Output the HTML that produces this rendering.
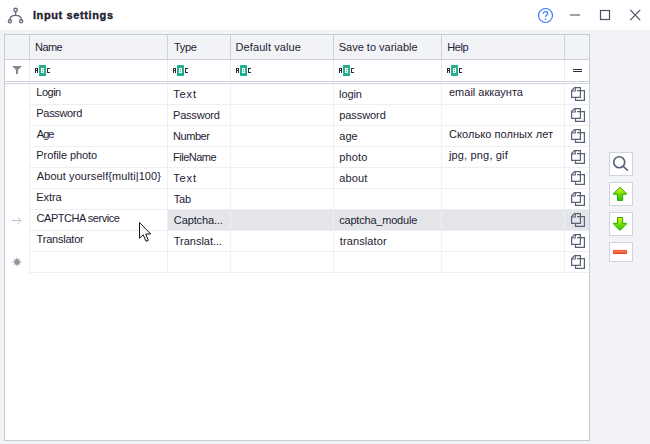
<!DOCTYPE html>
<html>
<head>
<meta charset="utf-8">
<title>Input settings</title>
<style>
html,body{margin:0;padding:0;}
body{width:650px;height:444px;overflow:hidden;background:#f1f3f7;font-family:"Liberation Sans",sans-serif;font-size:11px;color:#1e2233;position:relative;}
.abs{position:absolute;}
#titlebar{left:0;top:0;width:650px;height:30px;background:#ffffff;}
#title{left:32.92px;top:8px;font-weight:bold;font-size:11px;line-height:14px;letter-spacing:0.618px;white-space:nowrap;-webkit-text-stroke:0.35px #1c2030;color:#1c2030;}
#grid{left:4px;top:34px;width:584px;height:405px;border:1px solid #c6cbd9;background:#ffffff;}
/* coordinates inside #gridin are page coords (offset compensated) */
#gridin{left:-5px;top:-35px;width:650px;height:444px;}
#hdr{left:5px;top:35px;width:584px;height:24px;background:#f1f3f7;}
.hl{height:1px;background:#d3d6e1;}
.vl{width:1px;background:#cdd1dd;}
.vl2{width:1px;background:#eaecf2;}
.vl3{width:1px;background:#eef0f5;}
.rl{height:1px;background:#edeff4;left:29px;width:560px;}
.t{white-space:nowrap;line-height:14px;height:14px;}
.sel{background:#e4e5e9;}
</style>
</head>
<body>
<div id="titlebar" class="abs"></div>
<!-- window icon -->
<svg class="abs" style="left:5px;top:4px" width="22" height="22" viewBox="0 0 22 22" fill="none" stroke="#646b7c" stroke-width="1.4">
  <circle cx="10.6" cy="5.9" r="1.7"/>
  <circle cx="4.9" cy="17.3" r="1.55"/>
  <circle cx="16.2" cy="17.3" r="1.55"/>
  <path d="M10.6 7.6 V11.4 M4.9 15.7 C4.9 13 7 11.4 10.6 11.4 C14.2 11.4 16.2 13 16.2 15.7"/>
</svg>
<div id="title" class="abs">Input settings</div>
<!-- window buttons -->
<svg class="abs" style="left:536px;top:6px" width="110" height="20" viewBox="0 0 110 20" fill="none">
  <circle cx="9.5" cy="9.5" r="7" stroke="#3b78ff" stroke-width="1.2"/>
  <path d="M7.3 7.7 C7.3 6.4 8.3 5.7 9.5 5.7 C10.7 5.7 11.7 6.4 11.7 7.5 C11.7 9 9.5 9.1 9.5 11" stroke="#3b78ff" stroke-width="1.2"/>
  <circle cx="9.5" cy="13.1" r="0.8" fill="#3b78ff"/>
  <path d="M34 9 H44" stroke="#6a7080" stroke-width="1.3"/>
  <rect x="64.5" y="4.5" width="9" height="9" stroke="#4a5164" stroke-width="1.2"/>
  <path d="M94.2 3.8 L104.2 14.1 M104.2 3.8 L94.2 14.1" stroke="#4a5164" stroke-width="1.2"/>
</svg>

<div id="grid" class="abs"><div id="gridin" class="abs">
  <div id="hdr" class="abs"></div>
  <div class="abs hl" style="left:5px;top:59px;width:584px;background:#cdd1dd"></div>
  <div class="abs hl" style="left:5px;top:81px;width:584px;background:#cbcfdb"></div>
  <div class="abs hl" style="left:5px;top:83px;width:584px;background:#d0d4df"></div>
  <!-- selected row -->
  <div class="abs sel" style="left:168px;top:210px;width:421px;height:20px"></div>
  <!-- header/filter vertical lines -->
  <div class="abs vl" style="left:29px;top:35px;height:24px"></div>
  <div class="abs vl" style="left:167px;top:35px;height:24px"></div>
  <div class="abs vl" style="left:230px;top:35px;height:24px"></div>
  <div class="abs vl" style="left:333px;top:35px;height:24px"></div>
  <div class="abs vl" style="left:441px;top:35px;height:24px"></div>
  <div class="abs vl" style="left:564px;top:35px;height:24px"></div>
  <!-- body vertical lines -->
  <div class="abs vl2" style="left:29px;top:60px;height:21px"></div>
  <div class="abs vl2" style="left:167px;top:60px;height:21px"></div>
  <div class="abs vl2" style="left:230px;top:60px;height:21px"></div>
  <div class="abs vl2" style="left:333px;top:60px;height:21px"></div>
  <div class="abs vl2" style="left:441px;top:60px;height:21px"></div>
  <div class="abs vl2" style="left:564px;top:60px;height:21px"></div>
  <div class="abs vl3" style="left:29px;top:84px;height:189px"></div>
  <div class="abs vl3" style="left:167px;top:84px;height:189px"></div>
  <div class="abs vl3" style="left:230px;top:84px;height:189px"></div>
  <div class="abs vl3" style="left:333px;top:84px;height:189px"></div>
  <div class="abs vl3" style="left:441px;top:84px;height:189px"></div>
  <div class="abs vl3" style="left:564px;top:84px;height:189px"></div>
  <!-- row lines -->
  <div class="abs rl" style="top:104px"></div>
  <div class="abs rl" style="top:125px"></div>
  <div class="abs rl" style="top:146px"></div>
  <div class="abs rl" style="top:167px"></div>
  <div class="abs rl" style="top:188px"></div>
  <div class="abs rl" style="top:209px"></div>
  <div class="abs rl" style="top:230px"></div>
  <div class="abs rl" style="top:251px"></div>
  <div class="abs rl" style="top:272px"></div>

  <!-- header text -->
  <div class="abs t" style="left:35.00px;top:40px;letter-spacing:-0.546px">Name</div>
  <div class="abs t" style="left:174.00px;top:40px;letter-spacing:-0.333px">Type</div>
  <div class="abs t" style="left:235.54px;top:40px;letter-spacing:0.098px">Default value</div>
  <div class="abs t" style="left:338.72px;top:40px;letter-spacing:0.000px">Save to variable</div>
  <div class="abs t" style="left:447.26px;top:40px;letter-spacing:-0.419px">Help</div>

  <!-- filter row icons -->
  <svg class="abs" style="left:11px;top:65px" width="12" height="10" viewBox="0 0 12 10"><path d="M1 1 H11 L7 5 V9 H5 V5 Z" fill="#85898d"/></svg>
  <svg class="abs abc" style="left:35px;top:65px" width="16" height="11" viewBox="0 0 16 11"><g shape-rendering="crispEdges"><rect x="4" y="0" width="7" height="11" rx="0.6" fill="#22b08f" shape-rendering="auto"/>
      <path d="M0 3h3v5h-1v-2h-1v2h-1z M1 4h1v1h-1z" fill="#262b3a" fill-rule="evenodd"/>
      <path d="M6 3h3v5h-3z M7 4h1v1h-1z M7 6h1v1h-1z" fill="#ffffff" fill-rule="evenodd"/>
      <path d="M12 3h3v1h-2v3h2v1h-3z" fill="#262b3a"/></g></svg>
  <svg class="abs abc" style="left:173px;top:65px" width="16" height="11" viewBox="0 0 16 11"><g shape-rendering="crispEdges"><rect x="4" y="0" width="7" height="11" rx="0.6" fill="#22b08f" shape-rendering="auto"/>
      <path d="M0 3h3v5h-1v-2h-1v2h-1z M1 4h1v1h-1z" fill="#262b3a" fill-rule="evenodd"/>
      <path d="M6 3h3v5h-3z M7 4h1v1h-1z M7 6h1v1h-1z" fill="#ffffff" fill-rule="evenodd"/>
      <path d="M12 3h3v1h-2v3h2v1h-3z" fill="#262b3a"/></g></svg>
  <svg class="abs abc" style="left:236px;top:65px" width="16" height="11" viewBox="0 0 16 11"><g shape-rendering="crispEdges"><rect x="4" y="0" width="7" height="11" rx="0.6" fill="#22b08f" shape-rendering="auto"/>
      <path d="M0 3h3v5h-1v-2h-1v2h-1z M1 4h1v1h-1z" fill="#262b3a" fill-rule="evenodd"/>
      <path d="M6 3h3v5h-3z M7 4h1v1h-1z M7 6h1v1h-1z" fill="#ffffff" fill-rule="evenodd"/>
      <path d="M12 3h3v1h-2v3h2v1h-3z" fill="#262b3a"/></g></svg>
  <svg class="abs abc" style="left:339px;top:65px" width="16" height="11" viewBox="0 0 16 11"><g shape-rendering="crispEdges"><rect x="4" y="0" width="7" height="11" rx="0.6" fill="#22b08f" shape-rendering="auto"/>
      <path d="M0 3h3v5h-1v-2h-1v2h-1z M1 4h1v1h-1z" fill="#262b3a" fill-rule="evenodd"/>
      <path d="M6 3h3v5h-3z M7 4h1v1h-1z M7 6h1v1h-1z" fill="#ffffff" fill-rule="evenodd"/>
      <path d="M12 3h3v1h-2v3h2v1h-3z" fill="#262b3a"/></g></svg>
  <svg class="abs abc" style="left:447px;top:65px" width="16" height="11" viewBox="0 0 16 11"><g shape-rendering="crispEdges"><rect x="4" y="0" width="7" height="11" rx="0.6" fill="#22b08f" shape-rendering="auto"/>
      <path d="M0 3h3v5h-1v-2h-1v2h-1z M1 4h1v1h-1z" fill="#262b3a" fill-rule="evenodd"/>
      <path d="M6 3h3v5h-3z M7 4h1v1h-1z M7 6h1v1h-1z" fill="#ffffff" fill-rule="evenodd"/>
      <path d="M12 3h3v1h-2v3h2v1h-3z" fill="#262b3a"/></g></svg>
  <svg class="abs" style="left:572px;top:67px" width="12" height="6" viewBox="0 0 12 6"><path d="M1 2h9v1h-9z M1 4h9v1h-9z" fill="#2b3040" shape-rendering="crispEdges"/></svg>

  <!-- Name column -->
  <div class="abs t" style="left:36.36px;top:85px;letter-spacing:-0.525px">Login</div>
  <div class="abs t" style="left:36.36px;top:106px;letter-spacing:-0.337px">Password</div>
  <div class="abs t" style="left:36.76px;top:127px;letter-spacing:-0.950px">Age</div>
  <div class="abs t" style="left:36.36px;top:148px;letter-spacing:-0.077px">Profile photo</div>
  <div class="abs t" style="left:36.76px;top:169px;letter-spacing:0.087px">About yourself{multi|100}</div>
  <div class="abs t" style="left:36.18px;top:190px;letter-spacing:-0.045px">Extra</div>
  <div class="abs t" style="left:36.58px;top:211px;letter-spacing:-0.475px">CAPTCHA service</div>
  <div class="abs t" style="left:36.58px;top:232px;letter-spacing:-0.212px">Translator</div>
  <!-- Type column -->
  <div class="abs t" style="left:173.28px;top:87px;letter-spacing:0.847px">Text</div>
  <div class="abs t" style="left:173.08px;top:108px;letter-spacing:-0.220px">Password</div>
  <div class="abs t" style="left:173.08px;top:129px;letter-spacing:-0.452px">Number</div>
  <div class="abs t" style="left:173.08px;top:150px;letter-spacing:-0.517px">FileName</div>
  <div class="abs t" style="left:173.28px;top:171px;letter-spacing:0.847px">Text</div>
  <div class="abs t" style="left:173.82px;top:192px;letter-spacing:-0.220px">Tab</div>
  <div class="abs t" style="left:173.82px;top:213px;letter-spacing:-0.121px">Captcha...</div>
  <div class="abs t" style="left:173.82px;top:234px;letter-spacing:-0.018px">Translat...</div>
  <!-- Save to variable -->
  <div class="abs t" style="left:339.08px;top:87px;letter-spacing:-0.090px">login</div>
  <div class="abs t" style="left:339.28px;top:108px;letter-spacing:-0.080px">password</div>
  <div class="abs t" style="left:339.28px;top:129px;letter-spacing:0.040px">age</div>
  <div class="abs t" style="left:339.28px;top:150px;letter-spacing:0.160px">photo</div>
  <div class="abs t" style="left:339.28px;top:171px;letter-spacing:0.110px">about</div>
  <div class="abs t" style="left:339.28px;top:213px;letter-spacing:-0.210px">captcha_module</div>
  <div class="abs t" style="left:339.82px;top:234px;letter-spacing:0.101px">translator</div>
  <!-- Help -->
  <div class="abs t" style="left:449.00px;top:85px;letter-spacing:0.000px">email аккаунта</div>
  <div class="abs t" style="left:449.00px;top:127px;letter-spacing:0.059px">Сколько полных лет</div>
  <div class="abs t" style="left:448.90px;top:148px;letter-spacing:0.168px">jpg, png, gif</div>

  <!-- indicator column -->
  <svg class="abs" style="left:11px;top:216px" width="12" height="9" viewBox="0 0 12 9" fill="none" stroke="#bcc0c8" stroke-width="1"><path d="M1 4.5 H9.8 M6.6 1.2 L9.9 4.5 L6.6 7.8"/></svg>
  <svg class="abs" style="left:11.1px;top:256px" width="12" height="12" viewBox="0 0 12 12" overflow="visible"><polygon points="6.00,0.70 6.80,4.06 9.25,2.75 7.94,5.20 11.30,6.00 7.94,6.80 9.25,9.25 6.80,7.94 6.00,11.30 5.20,7.94 2.75,9.25 4.06,6.80 0.70,6.00 4.06,5.20 2.75,2.75 5.20,4.06" fill="#90949d"/><circle cx="6" cy="6" r="2.5" fill="#90949d"/></svg>

  <!-- copy icons -->
  <svg class="abs cp" style="left:570px;top:86px" width="16" height="16" viewBox="0 0 16 16"><g fill="none" stroke="#586077" stroke-width="1.2"><path d="M7 4.6 H14.4 V14.4 H5.5 V12"/>
      <path d="M4.6 1.6 H10.4 V11.4 H1.6 V4.6 Z"/>
      <path d="M5.3 1.8 V5 H1.8" stroke-width="1.1"/></g></svg>
  <svg class="abs cp" style="left:570px;top:107px" width="16" height="16" viewBox="0 0 16 16"><g fill="none" stroke="#586077" stroke-width="1.2"><path d="M7 4.6 H14.4 V14.4 H5.5 V12"/>
      <path d="M4.6 1.6 H10.4 V11.4 H1.6 V4.6 Z"/>
      <path d="M5.3 1.8 V5 H1.8" stroke-width="1.1"/></g></svg>
  <svg class="abs cp" style="left:570px;top:128px" width="16" height="16" viewBox="0 0 16 16"><g fill="none" stroke="#586077" stroke-width="1.2"><path d="M7 4.6 H14.4 V14.4 H5.5 V12"/>
      <path d="M4.6 1.6 H10.4 V11.4 H1.6 V4.6 Z"/>
      <path d="M5.3 1.8 V5 H1.8" stroke-width="1.1"/></g></svg>
  <svg class="abs cp" style="left:570px;top:149px" width="16" height="16" viewBox="0 0 16 16"><g fill="none" stroke="#586077" stroke-width="1.2"><path d="M7 4.6 H14.4 V14.4 H5.5 V12"/>
      <path d="M4.6 1.6 H10.4 V11.4 H1.6 V4.6 Z"/>
      <path d="M5.3 1.8 V5 H1.8" stroke-width="1.1"/></g></svg>
  <svg class="abs cp" style="left:570px;top:170px" width="16" height="16" viewBox="0 0 16 16"><g fill="none" stroke="#586077" stroke-width="1.2"><path d="M7 4.6 H14.4 V14.4 H5.5 V12"/>
      <path d="M4.6 1.6 H10.4 V11.4 H1.6 V4.6 Z"/>
      <path d="M5.3 1.8 V5 H1.8" stroke-width="1.1"/></g></svg>
  <svg class="abs cp" style="left:570px;top:191px" width="16" height="16" viewBox="0 0 16 16"><g fill="none" stroke="#586077" stroke-width="1.2"><path d="M7 4.6 H14.4 V14.4 H5.5 V12"/>
      <path d="M4.6 1.6 H10.4 V11.4 H1.6 V4.6 Z"/>
      <path d="M5.3 1.8 V5 H1.8" stroke-width="1.1"/></g></svg>
  <svg class="abs cp" style="left:570px;top:212px" width="16" height="16" viewBox="0 0 16 16"><g fill="none" stroke="#586077" stroke-width="1.2"><path d="M7 4.6 H14.4 V14.4 H5.5 V12"/>
      <path d="M4.6 1.6 H10.4 V11.4 H1.6 V4.6 Z"/>
      <path d="M5.3 1.8 V5 H1.8" stroke-width="1.1"/></g></svg>
  <svg class="abs cp" style="left:570px;top:233px" width="16" height="16" viewBox="0 0 16 16"><g fill="none" stroke="#586077" stroke-width="1.2"><path d="M7 4.6 H14.4 V14.4 H5.5 V12"/>
      <path d="M4.6 1.6 H10.4 V11.4 H1.6 V4.6 Z"/>
      <path d="M5.3 1.8 V5 H1.8" stroke-width="1.1"/></g></svg>
  <svg class="abs cp" style="left:570px;top:254px" width="16" height="16" viewBox="0 0 16 16"><g fill="none" stroke="#586077" stroke-width="1.2"><path d="M7 4.6 H14.4 V14.4 H5.5 V12"/>
      <path d="M4.6 1.6 H10.4 V11.4 H1.6 V4.6 Z"/>
      <path d="M5.3 1.8 V5 H1.8" stroke-width="1.1"/></g></svg>
</div></div>

<!-- side buttons -->
<div class="abs" style="left:609px;top:152px;width:22px;height:22px;border:1px solid #cfd3de;background:#fff"></div>
<div class="abs" style="left:609px;top:182px;width:22px;height:22px;border:1px solid #cfd3de;background:#fff"></div>
<div class="abs" style="left:609px;top:212px;width:22px;height:22px;border:1px solid #cfd3de;background:#fff"></div>
<div class="abs" style="left:609px;top:242px;width:22px;height:18px;border:1px solid #cfd3de;background:#fff"></div>
<svg class="abs" style="left:609px;top:152px" width="24" height="24" viewBox="0 0 24 24" fill="none" stroke="#596178" stroke-width="1.6"><circle cx="10.2" cy="10.2" r="5.5"/><path d="M14 14.1 L18.8 18.6"/></svg>
<svg class="abs" style="left:609px;top:182px" width="24" height="24" viewBox="0 0 24 24">
  <defs><linearGradient id="g1" x1="0" y1="0" x2="0" y2="1"><stop offset="0" stop-color="#e4f600"/><stop offset="0.45" stop-color="#86e000"/><stop offset="1" stop-color="#2cc400"/></linearGradient></defs>
  <path d="M11 5.4 L17.5 11.6 V12.2 H13.7 V18.4 H8.5 V12.2 H4.4 V11.6 Z" fill="url(#g1)" stroke="#22ac00" stroke-width="1" stroke-linejoin="round"/>
</svg>
<svg class="abs" style="left:609px;top:212px" width="24" height="24" viewBox="0 0 24 24">
  <defs><linearGradient id="g2" x1="0" y1="0" x2="0" y2="1"><stop offset="0" stop-color="#f0f800"/><stop offset="0.45" stop-color="#86e000"/><stop offset="1" stop-color="#2cc400"/></linearGradient></defs>
  <path d="M8.5 5.5 H13.7 V11.3 H17.5 V11.9 L11 18.4 L4.4 11.9 V11.3 H8.5 Z" fill="url(#g2)" stroke="#22ac00" stroke-width="1" stroke-linejoin="round"/>
</svg>
<svg class="abs" style="left:609px;top:242px" width="24" height="20" viewBox="0 0 24 20"><defs><linearGradient id="g3" x1="0" y1="0" x2="0" y2="1"><stop offset="0" stop-color="#fbb49a"/><stop offset="0.6" stop-color="#ee5a34"/><stop offset="1" stop-color="#e23c12"/></linearGradient></defs><rect x="4.4" y="8.4" width="13.2" height="3.2" rx="0.4" fill="url(#g3)" stroke="#e23c12" stroke-width="0.9"/></svg>

<!-- mouse cursor -->
<svg class="abs" style="left:138px;top:221px" width="16" height="24" viewBox="0 0 16 24"><path d="M1.5 1.5 V17.2 L5.2 13.8 L8 20.3 L10.4 19.3 L7.7 13 H12.7 Z" fill="#ffffff" stroke="#111111" stroke-width="1" stroke-linejoin="miter"/></svg>

</body>
</html>
